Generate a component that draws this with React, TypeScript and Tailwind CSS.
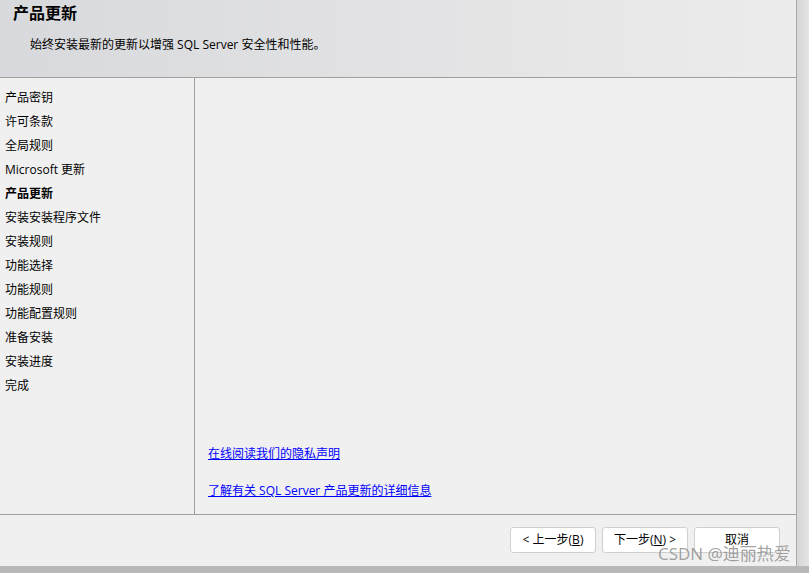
import React from 'react';

const steps = [
  '产品密钥',
  '许可条款',
  '全局规则',
  'Microsoft 更新',
  '产品更新',
  '安装安装程序文件',
  '安装规则',
  '功能选择',
  '功能规则',
  '功能配置规则',
  '准备安装',
  '安装进度',
  '完成',
];

const font = "font-['Open_Sans','Noto_Sans_CJK_SC',sans-serif]";

export default function App() {
  return (
    <div className={`relative w-[809px] h-[573px] bg-gradient-to-b from-[#c4c4c4] to-[#b8b8b8] overflow-hidden ${font}`}>
      <div className="flex h-[566px]">
        {/* installer window */}
        <div className="w-[797px] h-full flex flex-col bg-[#f0f0f0] border-r border-[#a8a8a8] text-[12px] text-black">
          {/* header */}
          <div className="h-[78px] shrink-0 border-b border-[#a0a0a0] bg-gradient-to-r from-[#d8d9dc] to-[#ececec] pl-[13px] pt-[1px]">
            <h1 className="text-[16px] font-bold leading-[24px]">产品更新</h1>
            <p className="mt-[10px] pl-[17px] leading-[20px]">始终安装最新的更新以增强 SQL Server 安全性和性能。</p>
          </div>

          {/* body */}
          <div className="flex flex-1 min-h-0">
            <div className="w-[195px] shrink-0 border-r border-[#a0a0a0] pt-[8px] pl-[5px]">
              {steps.map((s) => (
                <div key={s} className={`leading-[24px] ${s === '产品更新' ? 'font-bold' : ''}`}>
                  {s}
                </div>
              ))}
            </div>
            <div className="flex-1 flex flex-col justify-end pl-[13px] pb-[13px] gap-[17px]">
              <a href="#" className="text-[#0000ff] underline leading-[20px]">在线阅读我们的隐私声明</a>
              <a href="#" className="text-[#0000ff] underline leading-[20px]">了解有关 SQL Server 产品更新的详细信息</a>
            </div>
          </div>

          {/* footer */}
          <div className="h-[52px] shrink-0 border-t border-[#a0a0a0] flex justify-end items-start gap-[6px] pt-[12px] pr-[16px]">
            <button className="w-[86px] h-[26px] bg-white border border-[#d0d0d0] rounded-[3px] text-[12px]">
              &lt; 上一步(<span className="underline">B</span>)
            </button>
            <button className="w-[86px] h-[26px] bg-white border border-[#d0d0d0] rounded-[3px] text-[12px]">
              下一步(<span className="underline">N</span>) &gt;
            </button>
            <button className="w-[86px] h-[26px] bg-white border border-[#d0d0d0] rounded-[3px] text-[12px]">
              取消
            </button>
          </div>
        </div>
        <div className="flex-1 bg-gradient-to-r from-[#d6d6d6] to-[#e4e4e4]" />
      </div>

      {/* watermark */}
      <div className="absolute left-[658px] top-[543px] text-[17px] leading-[22px] text-[#8a8a8a]/80 whitespace-nowrap">
        CSDN @迪丽热爱
      </div>
    </div>
  );
}
